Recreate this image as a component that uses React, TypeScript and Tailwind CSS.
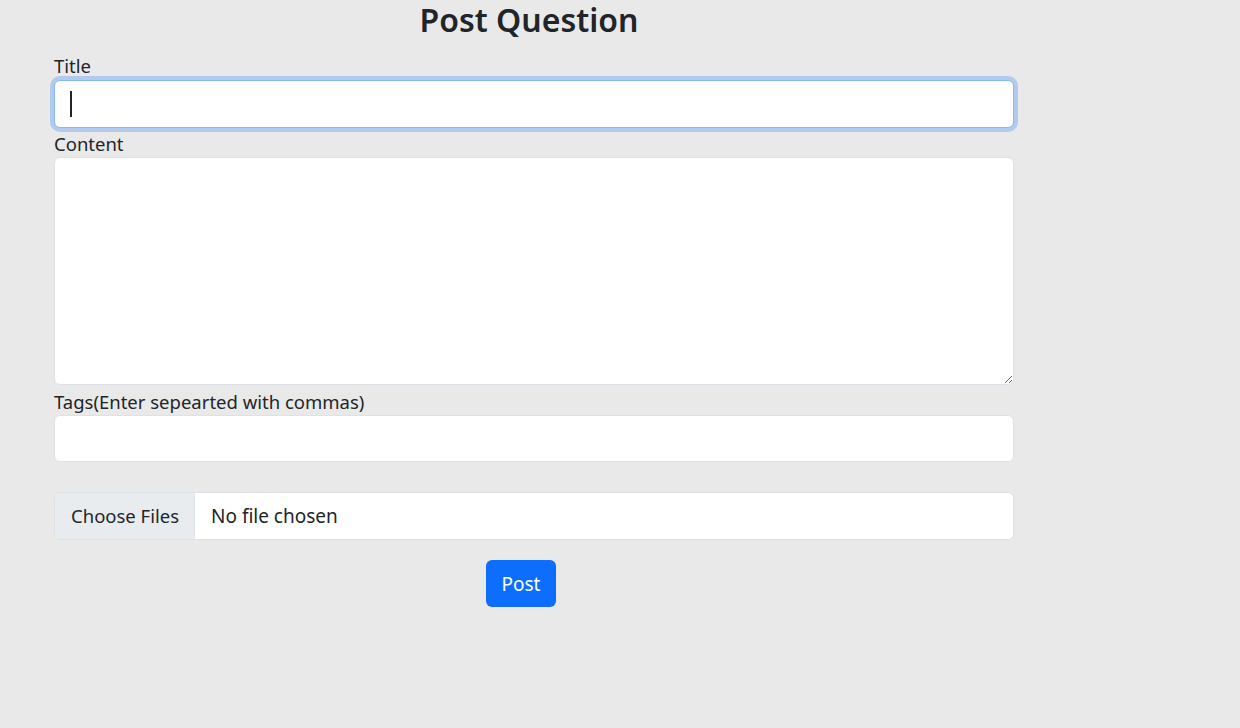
export default function App() {
  return (
    <div
      className="min-h-screen w-full bg-[#e9e9e9] text-[#212529]"
      style={{ fontFamily: '"Noto Sans", "Open Sans", sans-serif' }}
    >
      <div className="ml-[54px] w-[960px]">
        <h2 className="w-[950px] text-center text-[32px] leading-[38px] font-semibold pt-[1px]">
          Post Question
        </h2>

        <form className="mt-[15px] flex flex-col">
          <label className="block h-[26px] text-[18.5px] leading-[24px]">Title</label>
          <div className="relative">
            <input
              type="text"
              className="block h-[48px] w-full rounded-md border border-[#86b7fe] bg-white px-4 text-[20px] caret-transparent outline-none ring-4 ring-[#0d6efd]/25"
            />
            <span className="pointer-events-none absolute left-[16px] top-[11px] h-[26px] w-[2px] bg-[#212529]" />
          </div>

          <label className="mt-[4px] block h-[25px] text-[18.5px] leading-[24px]">Content</label>
          <textarea className="block h-[228px] w-full rounded-md border border-[#dee2e6] bg-white px-4 py-2 text-[20px] outline-none" />

          <label className="mt-[5px] block h-[25px] text-[18.5px] leading-[24px]">
            Tags(Enter sepearted with commas)
          </label>
          <input
            type="text"
            className="block h-[47px] w-full rounded-md border border-[#dee2e6] bg-white px-4 text-[20px] outline-none"
          />

          <div className="mt-[30px] flex h-[48px] w-full overflow-hidden rounded-md border border-[#dee2e6] bg-white text-[19px]">
            <div className="flex w-[140px] shrink-0 items-center whitespace-nowrap border-r border-[#dee2e6] bg-[#e9ecef] pl-4 text-[18.5px]">
              Choose Files
            </div>
            <div className="flex items-center whitespace-nowrap pl-4">No file chosen</div>
          </div>

          <div className="mt-[20px]">
            <button
              type="button"
              className="ml-[432px] h-[47px] w-[70px] rounded-md bg-[#0d6efd] pt-[2px] text-[19px] text-white"
            >
              Post
            </button>
          </div>
        </form>
      </div>
    </div>
  )
}
